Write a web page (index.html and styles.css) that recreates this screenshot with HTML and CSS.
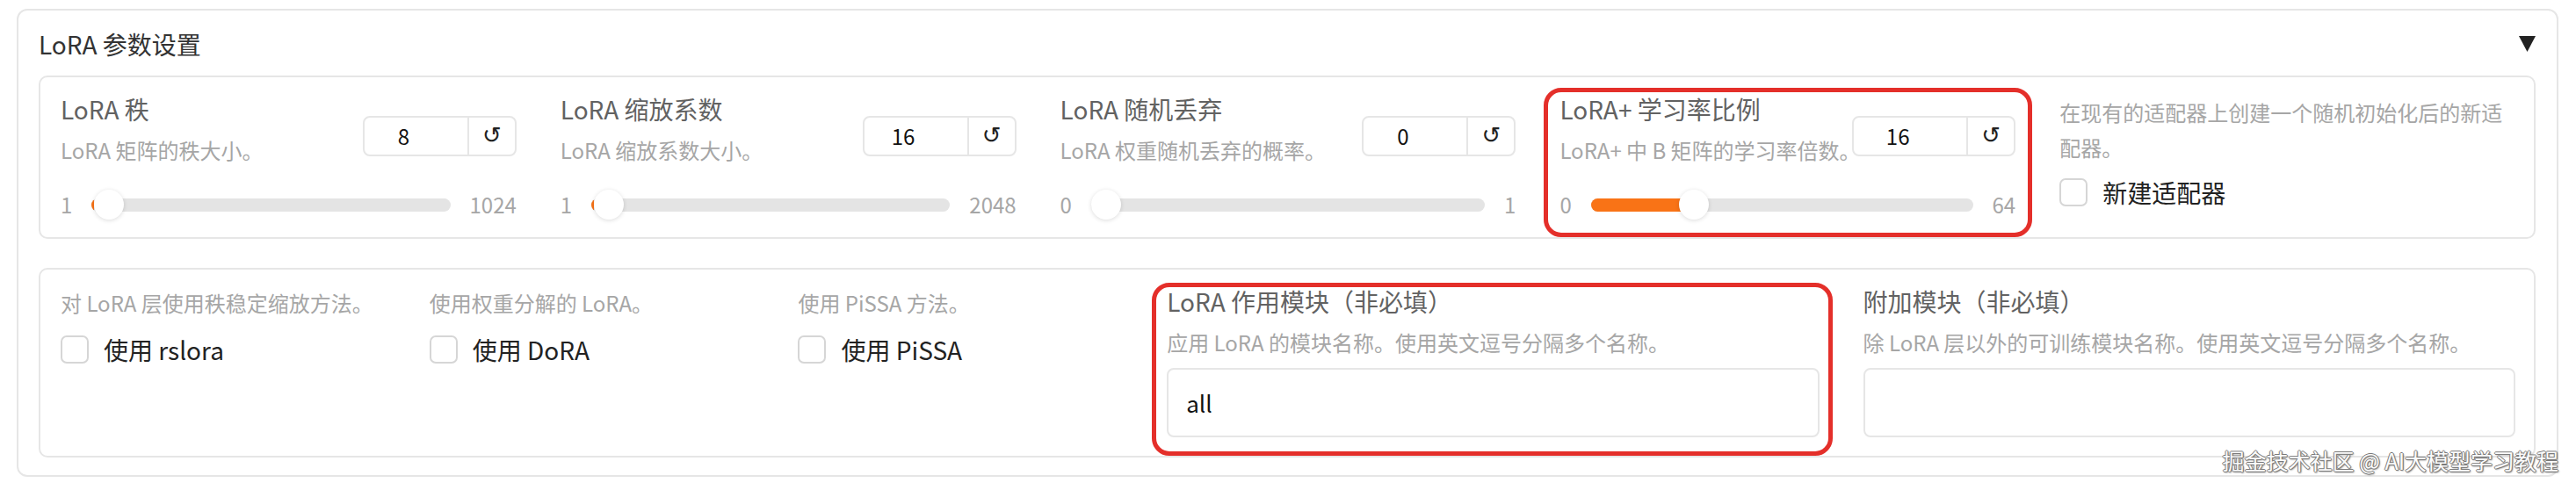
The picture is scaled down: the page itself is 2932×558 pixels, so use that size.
FILE: index.html
```html
<!DOCTYPE html>
<html lang="zh-CN">
<head>
<meta charset="utf-8">
<title>LoRA 参数设置</title>
<link rel="stylesheet" href="styles.css">
</head>
<body>
<div class="panel">
  <div class="panel-head">
    <span class="panel-title">LoRA 参数设置</span>
    <svg class="caret" width="19" height="18" viewBox="0 0 19 18"><polygon points="0,0 19,0 9.5,18" fill="#222"/></svg>
  </div>

  <div class="form form-top">
    <div class="col">
      <div class="slider-head">
        <div class="texts">
          <div class="label">LoRA 秩</div>
          <div class="info">LoRA 矩阵的秩大小。</div>
        </div>
        <div class="num"><span class="num-val">8</span><span class="num-reset">↺</span></div>
      </div>
      <div class="slider">
        <span class="minmax min">1</span>
        <div class="track" style="--p:0.00684"><div class="rail"><div class="fill"></div></div><div class="thumb"></div></div>
        <span class="minmax max">1024</span>
      </div>
    </div>

    <div class="col">
      <div class="slider-head">
        <div class="texts">
          <div class="label">LoRA 缩放系数</div>
          <div class="info">LoRA 缩放系数大小。</div>
        </div>
        <div class="num"><span class="num-val">16</span><span class="num-reset">↺</span></div>
      </div>
      <div class="slider">
        <span class="minmax min">1</span>
        <div class="track" style="--p:0.00733"><div class="rail"><div class="fill"></div></div><div class="thumb"></div></div>
        <span class="minmax max">2048</span>
      </div>
    </div>

    <div class="col">
      <div class="slider-head">
        <div class="texts">
          <div class="label">LoRA 随机丢弃</div>
          <div class="info">LoRA 权重随机丢弃的概率。</div>
        </div>
        <div class="num"><span class="num-val">0</span><span class="num-reset">↺</span></div>
      </div>
      <div class="slider">
        <span class="minmax min">0</span>
        <div class="track" style="--p:0"><div class="rail"><div class="fill"></div></div><div class="thumb"></div></div>
        <span class="minmax max">1</span>
      </div>
    </div>

    <div class="col col-mark-a">
      <div class="slider-head">
        <div class="texts">
          <div class="label">LoRA+ 学习率比例</div>
          <div class="info">LoRA+ 中 B 矩阵的学习率倍数。</div>
        </div>
        <div class="num num-wide"><span class="num-val">16</span><span class="num-reset">↺</span></div>
      </div>
      <div class="slider">
        <span class="minmax min">0</span>
        <div class="track" style="--p:0.25"><div class="rail"><div class="fill"></div></div><div class="thumb"></div></div>
        <span class="minmax max">64</span>
      </div>
    </div>

    <div class="col">
      <div class="info">在现有的适配器上创建一个随机初始化后的新适配器。</div>
      <label class="check check-top"><span class="box"></span><span class="check-label">新建适配器</span></label>
    </div>
  </div>

  <div class="form form-bottom">
    <div class="col col-check">
      <div class="info">对 LoRA 层使用秩稳定缩放方法。</div>
      <label class="check"><span class="box"></span><span class="check-label">使用 rslora</span></label>
    </div>
    <div class="col col-check">
      <div class="info">使用权重分解的 LoRA。</div>
      <label class="check"><span class="box"></span><span class="check-label">使用 DoRA</span></label>
    </div>
    <div class="col col-check">
      <div class="info">使用 PiSSA 方法。</div>
      <label class="check"><span class="box"></span><span class="check-label">使用 PiSSA</span></label>
    </div>
    <div class="col col-text col-mark-b">
      <div class="label">LoRA 作用模块（非必填）</div>
      <div class="info info-text">应用 LoRA 的模块名称。使用英文逗号分隔多个名称。</div>
      <div class="textbox">all</div>
    </div>
    <div class="col col-text">
      <div class="label">附加模块（非必填）</div>
      <div class="info info-text">除 LoRA 层以外的可训练模块名称。使用英文逗号分隔多个名称。</div>
      <div class="textbox"></div>
    </div>
  </div>

  <div class="watermark">掘金技术社区 @ AI大模型学习教程</div>
</div>
</body>
</html>
```

FILE: styles.css
```css
* { box-sizing: border-box; }

html, body {
  margin: 0;
  background: #ffffff;
}

body {
  padding: 10px 20px 13px 19px;
  font-family: "Noto Sans CJK SC", "Noto Sans", sans-serif;
  color: #222;
}

.panel {
  position: relative;
  border: 2px solid #e6e6e6;
  border-radius: 12px;
  background: #fff;
  padding: 0 24px 20px 23px;
}

.panel-head {
  display: flex;
  align-items: center;
  justify-content: space-between;
  height: 40px;
  margin-top: 18px;
  margin-bottom: 16px;
}

.panel-title {
  font-size: 28px;
  line-height: 40px;
  color: #333;
}

.caret { display: block; }

.form {
  display: flex;
  gap: 50px;
  border: 2px solid #e6e6e6;
  border-radius: 10px;
  background: #fff;
  padding-left: 23px;
  padding-right: 21px;
}

.form-top {
  padding-top: 20px;
  padding-bottom: 18px;
}

.form-bottom {
  margin-top: 33px;
  padding-top: 18px;
  padding-bottom: 21px;
}

.col {
  flex: 1 1 0;
  min-width: 0;
  position: relative;
}

.col-check { flex: 369 1 0; }
.col-text { flex: 741 1 0; }

.label {
  font-size: 28px;
  line-height: 40px;
  color: #626262;
  white-space: nowrap;
}

.info {
  font-size: 24px;
  line-height: 40px;
  color: #a6a6a6;
}

.slider-head {
  display: flex;
  justify-content: space-between;
  align-items: flex-start;
}

.texts {
  min-width: 0;
  white-space: nowrap;
}

.texts .label { margin-top: -4px; }
.texts .info { margin-top: 7px; }

.num {
  flex: none;
  display: flex;
  width: 175px;
  height: 46px;
  margin-top: 24px;
  border: 2px solid #e6e6e6;
  border-radius: 8px;
  background: #fff;
}

.num-wide { width: 186px; }

.num-val {
  flex: 1;
  padding-right: 28px;
  text-align: center;
  font-size: 24px;
  line-height: 42px;
  color: #111;
}

.num-reset {
  flex: none;
  width: 54px;
  border-left: 2px solid #e6e6e6;
  text-align: center;
  font-family: "DejaVu Sans", sans-serif;
  font-size: 26px;
  line-height: 40px;
  color: #222;
}

.slider {
  display: flex;
  align-items: center;
  height: 34px;
  margin-top: 25px;
}

.form-top .col { padding-bottom: 2px; }

.minmax {
  font-size: 24px;
  line-height: 34px;
  color: #a6a6a6;
  flex: none;
}

.min { margin-right: 22px; }
.max { margin-left: 22px; }

.track {
  position: relative;
  flex: 1;
  height: 34px;
  display: flex;
  align-items: center;
}

.rail {
  width: 100%;
  height: 15px;
  border-radius: 8px;
  background: #e4e4e4;
  overflow: hidden;
}

.fill {
  height: 100%;
  width: calc(var(--p) * 100%);
  background: #f97316;
}

.thumb {
  position: absolute;
  top: 0;
  left: calc(var(--p) * (100% - 34px));
  width: 34px;
  height: 34px;
  border-radius: 50%;
  background: #fff;
  box-shadow: 0 1px 5px rgba(0, 0, 0, 0.14);
}

.check {
  display: flex;
  align-items: center;
  height: 40px;
  gap: 17px;
}

.check-top { margin-top: 11px; }
.col-check .check { margin-top: 13px; }

.box {
  flex: none;
  width: 32px;
  height: 32px;
  border: 2px solid #d6d6d6;
  border-radius: 7px;
  background: #fff;
}

.check-label {
  font-size: 28px;
  line-height: 40px;
  color: #222;
  white-space: nowrap;
}

.col-text .label { margin-top: -2px; }

.info-text {
  margin-top: 7px;
  white-space: nowrap;
}

.textbox {
  margin-top: 9px;
  height: 79px;
  border: 2px solid #e6e6e6;
  border-radius: 8px;
  background: #fff;
  padding: 0 20px;
  font-size: 26px;
  line-height: 75px;
  color: #111;
}

.col-mark-a::after,
.col-mark-b::after {
  content: "";
  position: absolute;
  border: 5px solid #e42f2a;
  border-radius: 20px;
  pointer-events: none;
}

.col-mark-a::after {
  left: -18px;
  right: -19px;
  top: -8px;
  bottom: -18px;
}

.col-mark-b::after {
  left: -17px;
  right: -15px;
  top: -3px;
  bottom: -21px;
}

.watermark {
  position: absolute;
  right: -2px;
  bottom: 2px;
  font-size: 25px;
  line-height: 30px;
  color: #fbfbfb;
  white-space: nowrap;
  text-shadow: 1px 0 0 #7a7a7a, -1px 0 0 #7a7a7a, 0 1px 0 #7a7a7a, 0 -1px 0 #7a7a7a, 1px 1px 2px #555;
}
```
